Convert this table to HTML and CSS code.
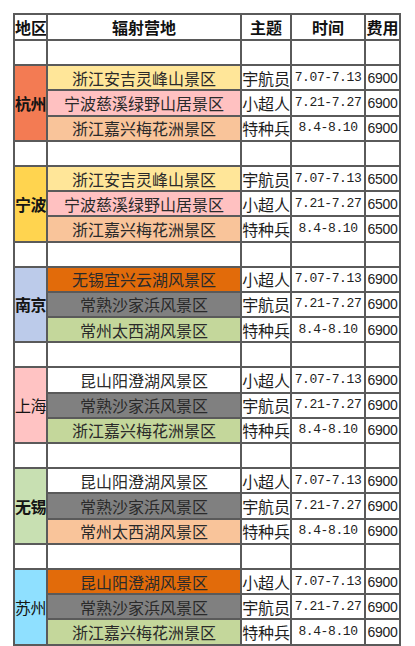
FILE: index.html
```html
<!DOCTYPE html>
<html lang="zh-CN">
<head>
<meta charset="utf-8">
<title>辐射营地</title>
<link rel="stylesheet" href="styles.css">
</head>
<body>
<table class="camp">
  <colgroup>
    <col class="c-area"><col class="c-camp"><col class="c-theme"><col class="c-time"><col class="c-fee">
  </colgroup>
  <thead>
    <tr class="head">
      <th>地区</th><th>辐射营地</th><th>主题</th><th>时间</th><th>费用</th>
    </tr>
  </thead>
  <tbody>
    <tr class="gap"><td></td><td></td><td></td><td></td><td></td></tr>
    <tr>
      <td class="area bold hz" rowspan="3">杭州</td>
      <td class="name yellow">浙江安吉灵峰山景区</td><td class="theme">宇航员</td><td class="time">7.07-7.13</td><td class="fee">6900</td>
    </tr>
    <tr><td class="name pink">宁波慈溪绿野山居景区</td><td class="theme">小超人</td><td class="time">7.21-7.27</td><td class="fee">6900</td></tr>
    <tr><td class="name peach">浙江嘉兴梅花洲景区</td><td class="theme">特种兵</td><td class="time">8.4-8.10</td><td class="fee">6900</td></tr>

    <tr class="gap"><td></td><td></td><td></td><td></td><td></td></tr>
    <tr>
      <td class="area bold nb" rowspan="3">宁波</td>
      <td class="name yellow">浙江安吉灵峰山景区</td><td class="theme">宇航员</td><td class="time">7.07-7.13</td><td class="fee">6500</td>
    </tr>
    <tr><td class="name pink">宁波慈溪绿野山居景区</td><td class="theme">小超人</td><td class="time">7.21-7.27</td><td class="fee">6500</td></tr>
    <tr><td class="name peach">浙江嘉兴梅花洲景区</td><td class="theme">特种兵</td><td class="time">8.4-8.10</td><td class="fee">6500</td></tr>

    <tr class="gap"><td></td><td></td><td></td><td></td><td></td></tr>
    <tr>
      <td class="area bold nj" rowspan="3">南京</td>
      <td class="name orange">无锡宜兴云湖风景区</td><td class="theme">小超人</td><td class="time">7.07-7.13</td><td class="fee">6900</td>
    </tr>
    <tr><td class="name gray">常熟沙家浜风景区</td><td class="theme">宇航员</td><td class="time">7.21-7.27</td><td class="fee">6900</td></tr>
    <tr><td class="name green">常州太西湖风景区</td><td class="theme">特种兵</td><td class="time">8.4-8.10</td><td class="fee">6900</td></tr>

    <tr class="gap"><td></td><td></td><td></td><td></td><td></td></tr>
    <tr>
      <td class="area sh" rowspan="3">上海</td>
      <td class="name white">昆山阳澄湖风景区</td><td class="theme">小超人</td><td class="time">7.07-7.13</td><td class="fee">6900</td>
    </tr>
    <tr><td class="name gray">常熟沙家浜风景区</td><td class="theme">宇航员</td><td class="time">7.21-7.27</td><td class="fee">6900</td></tr>
    <tr><td class="name green">浙江嘉兴梅花洲景区</td><td class="theme">特种兵</td><td class="time">8.4-8.10</td><td class="fee">6900</td></tr>

    <tr class="gap"><td></td><td></td><td></td><td></td><td></td></tr>
    <tr>
      <td class="area bold wx" rowspan="3">无锡</td>
      <td class="name white">昆山阳澄湖风景区</td><td class="theme">小超人</td><td class="time">7.07-7.13</td><td class="fee">6900</td>
    </tr>
    <tr><td class="name gray">常熟沙家浜风景区</td><td class="theme">宇航员</td><td class="time">7.21-7.27</td><td class="fee">6900</td></tr>
    <tr><td class="name peach">常州太西湖风景区</td><td class="theme">特种兵</td><td class="time">8.4-8.10</td><td class="fee">6900</td></tr>

    <tr class="gap"><td></td><td></td><td></td><td></td><td></td></tr>
    <tr>
      <td class="area sz" rowspan="3">苏州</td>
      <td class="name orange">昆山阳澄湖风景区</td><td class="theme">小超人</td><td class="time">7.07-7.13</td><td class="fee">6900</td>
    </tr>
    <tr><td class="name gray">常熟沙家浜风景区</td><td class="theme">宇航员</td><td class="time">7.21-7.27</td><td class="fee">6900</td></tr>
    <tr><td class="name green">浙江嘉兴梅花洲景区</td><td class="theme">特种兵</td><td class="time">8.4-8.10</td><td class="fee">6900</td></tr>
  </tbody>
</table>
</body>
</html>
```
FILE: styles.css
```css
html, body {
  margin: 0;
  padding: 0;
  background: #ffffff;
}

body {
  padding: 13px 0 0 13px;
  font-family: "Noto Sans CJK SC", "Liberation Sans", sans-serif;
  color: #1e1e1e;
}

.camp {
  border-collapse: separate;
  border-spacing: 0;
  table-layout: fixed;
  width: 388px;
  border-left: 2px solid #5a5a5a;
  border-top: 2px solid #5a5a5a;
}

.c-area { width: 33px; }
.c-camp { width: 194px; }
.c-theme { width: 50px; }
.c-time { width: 74px; }
.c-fee { width: 35px; }

.camp th,
.camp td {
  padding: 0;
  border-right: 2px solid #5a5a5a;
  border-bottom: 2px solid #5a5a5a;
  text-align: center;
  vertical-align: middle;
  white-space: nowrap;
  overflow: hidden;
  font-size: 16px;
  line-height: 18px;
  background: #ffffff;
}

.head th {
  height: 24px;
  font-weight: 700;
  color: #111111;
}

.camp tbody td {
  height: 23.2px;
}

.name {
  font-size: 16px;
  color: #2a2a2a;
}

.theme {
  font-size: 16px;
  letter-spacing: -0.2px;
  color: #1e1e1e;
}

.camp .time {
  font-family: "Liberation Mono", "DejaVu Sans Mono", monospace;
  font-size: 13px;
  letter-spacing: -0.4px;
  color: #222222;
}

.camp .fee {
  font-family: "Liberation Sans", sans-serif;
  font-size: 14px;
  letter-spacing: -0.3px;
  color: #222222;
}

.area {
  font-size: 16px;
  letter-spacing: -0.5px;
  color: #141414;
}

.bold { font-weight: 700; }

.hz { background: #f37b53 !important; }
.nb { background: #ffd44f !important; }
.nj { background: #bccbea !important; }
.sh { background: #ffc3c3 !important; }
.wx { background: #c8e0b2 !important; }
.sz { background: #8fe0ff !important; }

.yellow { background: #ffe699 !important; }
.pink { background: #ffc1c1 !important; }
.peach { background: #f9c49a !important; }
.orange { background: #e26b0a !important; }
.gray { background: #808080 !important; }
.green { background: #c4d79b !important; }
.white { background: #ffffff !important; }
```
